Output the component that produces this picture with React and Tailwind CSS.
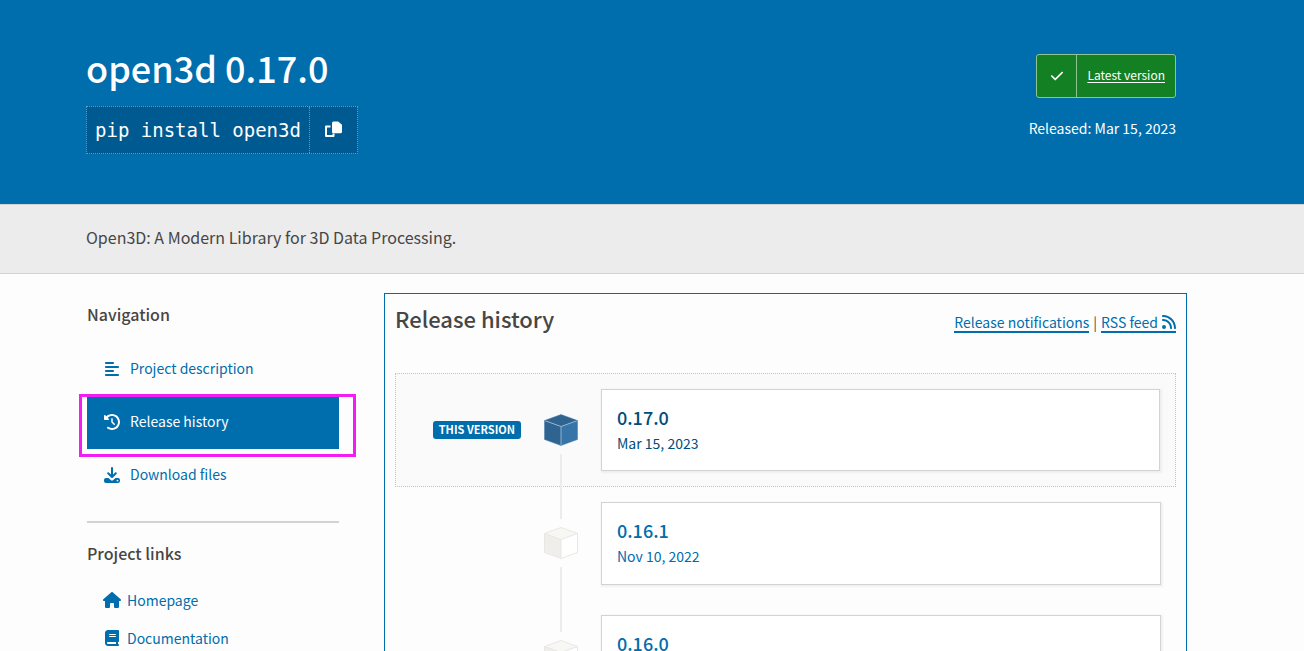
import { FaAlignLeft, FaBook, FaCheck, FaClockRotateLeft, FaHouse, FaRss } from 'react-icons/fa6';

const releases = [
  { version: '0.17.0', date: 'Mar 15, 2023', current: true },
  { version: '0.16.1', date: 'Nov 10, 2022' },
  { version: '0.16.0', date: 'Oct 19, 2022' },
];

const tabs = [
  { label: 'Project description', icon: FaAlignLeft },
  { label: 'Release history', icon: FaClockRotateLeft, active: true },
  { label: 'Download files', icon: DownloadIcon },
];

const links = [
  { label: 'Homepage', icon: FaHouse },
  { label: 'Documentation', icon: FaBook },
];

function CopyIcon() {
  return (
    <svg viewBox="0 0 18 18" className="w-[18px] h-[18px]" aria-hidden="true">
      <path d="M6.500 5.500H2V15h7.500v-2.500" fill="none" stroke="currentColor" strokeWidth="2" strokeLinejoin="round" />
      <path
        d="M9.500 .5h4.700L18 3.800v7a1.500 1.500 0 0 1-1.500 1.500h-7A1.500 1.500 0 0 1 8 10.800V2A1.500 1.500 0 0 1 9.500 .5z"
        fill="currentColor"
      />
    </svg>
  );
}

function DownloadIcon({ className }) {
  return (
    <svg viewBox="0 0 16 16" className={className} aria-hidden="true">
      <path
        d="M8 1v8.500M4.200 6.200 8 10l3.800-3.800"
        fill="none"
        stroke="currentColor"
        strokeWidth="2"
        strokeLinecap="round"
        strokeLinejoin="round"
      />
      <path
        fillRule="evenodd"
        d="M2 11h2.400L7 13.200a1.500 1.500 0 0 0 2 0L11.600 11H14a2 2 0 0 1 2 2v1a2 2 0 0 1-2 2H2a2 2 0 0 1-2-2v-1a2 2 0 0 1 2-2zm11.500 1.700a.9.9 0 1 0 0 1.800.9.9 0 0 0 0-1.800z"
        fill="currentColor"
      />
    </svg>
  );
}

function Cube({ blue }) {
  const [top, left, right, line] = blue
    ? ['#2f6491', '#2f6491', '#3775a9', '#8fb2cf']
    : ['#f7f7f4', '#efeeea', '#ffffff', '#e8e7e3'];
  return (
    <svg viewBox="0 0 34 32" className="w-[34px] h-8 shrink-0" aria-hidden="true">
      <path d="M17 .5 33.500 6.500 17 12.500.5 6.500z" fill={top} />
      <path d="M.5 6.500 17 12.500v19L.5 25.500z" fill={left} />
      <path d="M33.500 6.500 17 12.500v19l16.500-6z" fill={right} />
      <path d="M.5 6.500 17 12.500l16.500-6M17 12.500v19" fill="none" stroke={line} />
      <path
        d="M17 .5 33.500 6.500v19L17 31.500.5 25.500v-19z"
        fill="none"
        stroke={blue ? '#4a7ba6' : line}
        strokeWidth={blue ? 0.5 : 1}
      />
    </svg>
  );
}

function Release({ version, date, current }) {
  return (
    <li
      className={`flex ${
        current ? 'border border-dotted border-[#c3c3c3] bg-[#fafafa] px-[15px]' : 'pl-4 pr-[15px]'
      }`}
    >
      <div className="w-[110px] shrink-0 flex items-center justify-end">
        {current && (
          <span className="rounded-[3px] bg-[#006dad] px-1.5 h-[18px] leading-4 text-[11px] font-bold text-white whitespace-nowrap">
            THIS VERSION
          </span>
        )}
      </div>
      <div className="w-20 shrink-0 flex flex-col items-center">
        <div className={`w-0.5 h-8 ${current ? '' : 'bg-[#ececec]'}`} />
        <div className="h-12 flex items-center">
          <Cube blue={current} />
        </div>
        <div className={`w-0.5 flex-1 bg-[#ececec] ${current ? '-mb-px' : ''}`} />
      </div>
      <a
        href="#release"
        className={`flex-1 my-[15px] border border-[#d3d3d3] bg-white px-[15px] pt-[13px] shadow-[1px_1px_2px_1px_rgba(0,0,0,0.05)] ${
          current ? 'h-[82px] text-[#004d7a]' : 'h-[83px] text-[#006dad]'
        }`}
      >
        <p className="text-[18px] leading-7 font-medium">{version}</p>
        <p className="text-[14px] leading-6">{date}</p>
      </a>
    </li>
  );
}

export default function App() {
  return (
    <div className="min-h-screen bg-[#fdfdfd] text-[#464646] font-['Noto_Sans_CJK_SC','Noto_Sans',sans-serif]">
      <header className="bg-[#006dad] text-white pl-[86px] pr-32 pt-[42px] pb-[50px] flex justify-between">
        <div>
          <h1 className="text-[36px] leading-[50px] font-medium">open3d 0.17.0</h1>
          <div className="mt-3.5 h-12 inline-flex border border-dotted border-[#5f9dc6] bg-[#005a92]">
            <span className="px-2 leading-[46px] text-[19px] font-['DejaVu_Sans_Mono',monospace]">
              pip install open3d
            </span>
            <button
              type="button"
              aria-label="Copy PIP instructions"
              className="w-12 border-l border-dotted border-[#5f9dc6] flex items-center justify-center"
            >
              <CopyIcon />
            </button>
          </div>
        </div>
        <div className="flex flex-col items-end pt-3">
          <a href="#latest" className="h-11 flex items-center rounded-[3px] border border-[#8fc493] bg-[#148024]">
            <span className="w-10 self-stretch flex items-center justify-center border-r border-[#8fc493]">
              <FaCheck className="w-[14px] h-[14px]" />
            </span>
            <span className="px-2.5 pb-[3px] text-[12px] underline underline-offset-2">Latest version</span>
          </a>
          <p className="mt-[18px] text-[14px] leading-6">Released: Mar 15, 2023</p>
        </div>
      </header>

      <div className="border-y border-[#d3d3d3] bg-[#ececec] pl-[86px] pr-32 pt-5 pb-6">
        <p className="text-[16px] leading-6">Open3D: A Modern Library for 3D Data Processing.</p>
      </div>

      <div className="flex pl-[87px] pr-[117px]">
        <aside className="w-[252px] shrink-0 pt-7">
          <h2 className="text-[16px] leading-6 font-medium">Navigation</h2>
          <nav className="mt-[18px]">
            {tabs.map(({ label, icon: Icon, active }) => (
              <a
                key={label}
                href="#tab"
                className={`relative h-[52px] pl-[17px] pb-[3px] mb-px flex items-center gap-[10px] text-[14px] ${
                  active ? 'bg-[#006dad] text-white' : 'text-[#006dad]'
                }`}
              >
                <Icon className="w-4 h-4" />
                {label}
                {active && (
                  <span className="absolute -left-2 -right-[17px] -top-[3px] -bottom-2 border-[3px] border-[#f21df2]" />
                )}
              </a>
            ))}
          </nav>
          <hr className="mt-[19px] border-t-2 border-[#d3d3d3]" />
          <h2 className="mt-[18px] text-[16px] leading-6 font-medium">Project links</h2>
          <ul className="mt-4">
            {links.map(({ label, icon: Icon }) => (
              <li key={label}>
                <a href="#link" className="h-[38px] pl-4 flex items-center gap-1.5 text-[14px] text-[#006dad]">
                  <Icon className="w-[18px] h-4" />
                  {label}
                </a>
              </li>
            ))}
          </ul>
        </aside>

        <main className="flex-1 ml-[45px] mt-[19px] border border-[#006dad] px-2.5">
          <div className="pt-2.5 flex justify-between">
            <h2 className="text-[22px] leading-7 font-medium">Release history</h2>
            <p className="mt-1.5 text-[14px] leading-6 text-[#006dad] flex items-start gap-1">
              <a href="#notifications" className="leading-[18px] mt-[3px] border-b-2 border-[#006dad]">
                Release notifications
              </a>
              <span className="text-[#464646]">|</span>
              <a href="#rss" className="leading-[18px] mt-[3px] border-b-2 border-[#006dad] flex items-center gap-1">
                RSS feed
                <FaRss className="w-3.5 h-4" />
              </a>
            </p>
          </div>
          <ol className="mt-[39px]">
            {releases.map((release) => (
              <Release key={release.version} {...release} />
            ))}
          </ol>
        </main>
      </div>
    </div>
  );
}
